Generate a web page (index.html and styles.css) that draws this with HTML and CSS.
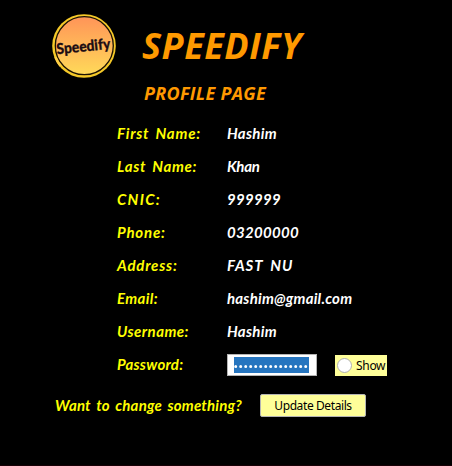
FILE: index.html
```html
<!DOCTYPE html>
<html lang="en">
<head>
<meta charset="utf-8">
<title>Speedify - Profile Page</title>
<link rel="stylesheet" href="styles.css">
</head>
<body>
<main class="page">
  <header class="header">
    <svg class="logo" width="66" height="66" viewBox="0 0 66 66">
      <defs>
        <linearGradient id="sun" x1="0" y1="0" x2="0" y2="1">
          <stop offset="0" stop-color="#ff9458"/>
          <stop offset="1" stop-color="#ffda59"/>
        </linearGradient>
      </defs>
      <circle cx="33" cy="33" r="31.8" fill="#f5c928"/>
      <circle cx="33.3" cy="32.7" r="29" fill="url(#sun)" stroke="#1c1204" stroke-width="1.3"/>
      <path d="M4.5 44 Q6 49 9.5 53" fill="none" stroke="#ffce45" stroke-width="2.4"/>
      <text class="logo-text" x="5.5" y="38.5" textLength="54" lengthAdjust="spacingAndGlyphs" transform="rotate(-6 33 35)">Speedify</text>
    </svg>
    <div class="titles">
      <h1 class="brand">SPEEDIFY</h1>
      <h2 class="subtitle">PROFILE PAGE</h2>
    </div>
  </header>
  <dl class="details">
    <dt class="first">First Name:</dt><dd>Hashim</dd>
    <dt class="last">Last Name:</dt><dd class="khan">Khan</dd>
    <dt class="cnic">CNIC:</dt><dd class="digits">999999</dd>
    <dt class="phone">Phone:</dt><dd class="digits">03200000</dd>
    <dt class="address">Address:</dt><dd class="place">FAST NU</dd>
    <dt class="email">Email:</dt><dd class="mail">hashim@gmail.com</dd>
    <dt class="user">Username:</dt><dd>Hashim</dd>
    <dt class="pass">Password:</dt>
    <dd class="controls">
      <span class="password"><span class="selection"><svg width="75" height="16"><path class="dots" d="M1.7 9.5H73"/></svg></span></span>
      <label class="show"><span class="radio"></span><span>Show</span></label>
    </dd>
  </dl>
  <footer class="footer">
    <span class="question">Want to change something?</span>
    <button class="update" type="button">Update Details</button>
  </footer>
</main>
</body>
</html>
```
FILE: styles.css
```css
* { box-sizing: border-box; }
body { margin: 0; background: #000; }
.page {
  width: 452px;
  height: 466px;
  overflow: hidden;
  background: #000;
  border-bottom: 1px solid #180006;
}
.header { display: flex; height: 117px; padding: 13px 0 0 51px; }
.logo { flex: none; overflow: visible; }
.logo-text { font: 900 15px Lato, sans-serif; fill: #1c0d14; stroke: #1c0d14; stroke-width: .3; }
.titles { margin-left: 25px; color: #ff9900; font-family: "Open Sans", sans-serif; font-style: italic; }
.brand { margin: 0; font-size: 36px; line-height: 66px; font-weight: 700; letter-spacing: .55px; white-space: nowrap; }
.subtitle { margin: 0 0 0 2px; font-size: 18px; line-height: 28px; font-weight: 700; letter-spacing: .28px; white-space: nowrap; }
.details, .question { font: italic 700 15px/33px Lato, "Comic Sans MS", sans-serif; letter-spacing: .8px; }
.details {
  display: grid;
  grid-template-columns: 110px auto;
  grid-auto-rows: 33px;
  margin: 0;
  padding-left: 117px;
  white-space: nowrap;
}
dt { color: #ffff00; word-spacing: 2px; }
dd { margin: 0; color: #fff; letter-spacing: .3px; }
.last { letter-spacing: .7px; }
.cnic { letter-spacing: 1.3px; }
.email { letter-spacing: .4px; }
.user { letter-spacing: .45px; }
.pass { letter-spacing: .25px; }
.khan { letter-spacing: -.3px; }
.place { letter-spacing: .9px; word-spacing: 3px; }
.mail { letter-spacing: .22px; }
.controls { display: flex; align-items: center; letter-spacing: 0; }
.password {
  width: 90px;
  height: 22px;
  padding: 2px 6px;
  background: #fff;
  border: 1px solid #b4b4b4;
}
.selection { display: block; width: 75px; height: 16px; background: #2675bf; }
.selection svg { display: block; }
.dots { fill: none; stroke: #fff; stroke-width: 3; stroke-linecap: round; stroke-dasharray: 0 5; }
.show, .update { font: 12px "Noto Sans", sans-serif; color: #000; background: #ffff99; }
.show {
  display: flex;
  align-items: center;
  gap: 4px;
  width: 52px;
  height: 21px;
  margin: 1px 0 0 18px;
  padding-left: 2px;
  letter-spacing: -.3px;
}
.radio { width: 15px; height: 15px; border: 1px solid #b0b0b0; border-radius: 50%; background: #fff; }
.footer { display: flex; height: 48px; padding: 8px 0 0 55px; }
.question { width: 205px; color: #ffff00; line-height: 32px; letter-spacing: .2px; white-space: nowrap; word-spacing: 2px; }
.update {
  width: 106px;
  height: 23px;
  margin-top: 5px;
  padding: 0;
  border: 1px solid #b4b4b4;
  border-radius: 2px;
  letter-spacing: -.4px;
}
```
